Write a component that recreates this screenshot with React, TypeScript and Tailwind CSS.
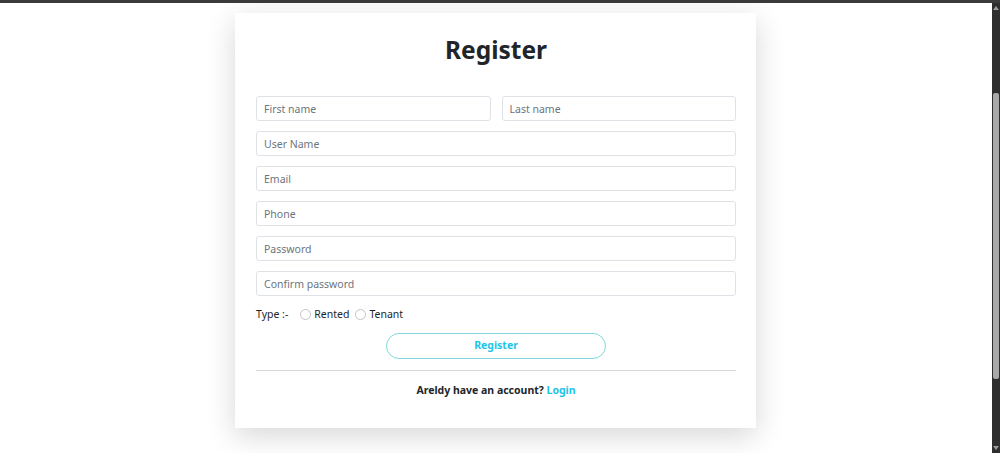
import React from "react"

const font = { fontFamily: '"Noto Sans", "Open Sans", Arial, sans-serif' }

function Field({ placeholder, type = "text" }: { placeholder: string; type?: string }) {
  return (
    <input
      type={type}
      placeholder={placeholder}
      className="h-[25px] w-full rounded-[3px] border border-[#dee2e6] bg-white px-[7px] text-[10.5px] text-[#212529] outline-none placeholder:text-[#6c757d]"
    />
  )
}

function Radio({ label }: { label: string }) {
  return (
    <label className="flex items-center gap-[3px]">
      <span className="h-[11px] w-[11px] rounded-full border border-[#c4c4c4] bg-white" />
      <span>{label}</span>
    </label>
  )
}

export default function App() {
  return (
    <div className="flex h-[453px] w-full overflow-hidden border-t-[3px] border-[#3b3b3b] bg-white" style={font}>
      <main className="flex flex-1 justify-center">
        <div className="mt-[10px] mr-[1px] h-[415px] w-[521px] bg-white pl-[21px] pr-[20px] pt-[21px] shadow-[0_8px_28px_rgba(0,0,0,0.16)]">
          <h1 className="text-center text-[24.5px] font-bold leading-[32px] text-[#212529]">Register</h1>

          <div className="mt-[30px] flex flex-col gap-[10px]">
            <div className="flex gap-[11px]">
              <Field placeholder="First name" />
              <Field placeholder="Last name" />
            </div>
            <Field placeholder="User Name" />
            <Field placeholder="Email" type="email" />
            <Field placeholder="Phone" />
            <Field placeholder="Password" type="password" />
            <Field placeholder="Confirm password" type="password" />
          </div>

          <div className="mt-[10px] flex h-[16px] items-center text-[10.5px] leading-[16px] text-[#212529]">
            <span className="mr-[12px]">Type :-</span>
            <div className="flex items-center gap-[6px]">
              <Radio label="Rented" />
              <Radio label="Tenant" />
            </div>
          </div>

          <div className="mt-[11px] flex justify-center">
            <button className="h-[26px] w-[220px] rounded-full border border-[#7fd8dc] bg-white text-[10.5px] font-bold text-[#1ec3e6]">
              Register
            </button>
          </div>

          <hr className="mt-[11px] border-t border-[#d6d6d6]" />

          <p className="mt-[11px] text-center text-[10.5px] font-bold leading-[16px] text-[#212529]">
            Areldy have an account? <span className="text-[#1ec3e6]">Login</span>
          </p>
        </div>
      </main>

      <div className="flex w-[8px] flex-col items-center bg-[#2e2e2e]">
        <span className="mt-[3px] h-0 w-0 border-x-[3px] border-b-[4px] border-x-transparent border-b-[#9a9a9a]" />
        <div className="mt-[83px] h-[286px] w-[6px] rounded-[2px] bg-[#a8a8a8]" />
        <div className="flex-1" />
        <span className="mb-[3px] h-0 w-0 border-x-[3px] border-t-[4px] border-x-transparent border-t-[#9a9a9a]" />
      </div>
    </div>
  )
}
